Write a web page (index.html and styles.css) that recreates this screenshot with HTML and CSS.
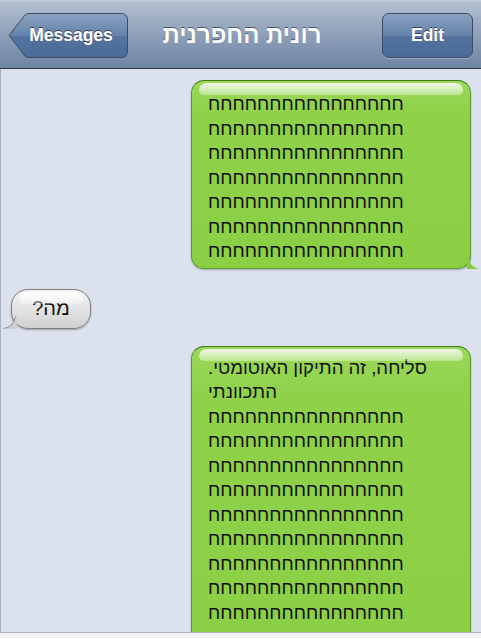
FILE: index.html
```html
<!DOCTYPE html>
<html lang="he">
<head>
    <meta charset="UTF-8">
    <meta name="viewport" content="width=device-width, initial-scale=1.0">
    <title>רונית החפרנית</title>
    <link rel="stylesheet" href="styles.css">
</head>
<body>
    <div class="screen">
        <header class="navbar">
            <a class="nav-btn back-btn" href="#">
                <svg class="back-shape" width="120" height="45" viewBox="0 0 120 45">
                    <defs>
                        <linearGradient id="backFill" x1="0" y1="0" x2="0" y2="1">
                            <stop offset="0" stop-color="#8aa2c2"/>
                            <stop offset="0.5" stop-color="#6682aa"/>
                            <stop offset="0.51" stop-color="#55739f"/>
                            <stop offset="1" stop-color="#4a6a98"/>
                        </linearGradient>
                    </defs>
                    <path d="M1 22.5 L17 2 Q18.5 0.5 21 0.5 L113 0.5 Q119.5 0.5 119.5 7 L119.5 38 Q119.5 44.5 113 44.5 L21 44.5 Q18.5 44.5 17 43 Z" fill="url(#backFill)" stroke="#3a4c68" stroke-width="1"/>
                </svg>
                <span>Messages</span>
            </a>
            <h1 class="title">רונית החפרנית</h1>
            <a class="nav-btn edit-btn" href="#">Edit</a>
        </header>

        <main class="thread">
            <div class="bubble sent">
                <p>חחחחחחחחחחחחחחחח<br>חחחחחחחחחחחחחחחח<br>חחחחחחחחחחחחחחחח<br>חחחחחחחחחחחחחחחח<br>חחחחחחחחחחחחחחחח<br>חחחחחחחחחחחחחחחח<br>חחחחחחחחחחחחחחחח</p>
            </div>

            <div class="bubble received">
                <p>מה?</p>
            </div>

            <div class="bubble sent long">
                <p>סליחה, זה התיקון האוטומטי.<br>התכוונתי<br>חחחחחחחחחחחחחחחח<br>חחחחחחחחחחחחחחחח<br>חחחחחחחחחחחחחחחח<br>חחחחחחחחחחחחחחחח<br>חחחחחחחחחחחחחחחח<br>חחחחחחחחחחחחחחחח<br>חחחחחחחחחחחחחחחח<br>חחחחחחחחחחחחחחחח<br>חחחחחחחחחחחחחחחח</p>
            </div>
        </main>

        <footer class="toolbar"></footer>
    </div>
</body>
</html>
```

FILE: styles.css
```css
body {
    margin: 0;
    font-family: "Liberation Sans", "DejaVu Sans", Arial, sans-serif;
    background-color: #dbe2ed;
}
.screen {
    width: 481px;
    height: 638px;
    overflow: hidden;
    display: flex;
    flex-direction: column;
}

/* Navigation bar */
.navbar {
    height: 66px;
    flex-shrink: 0;
    display: flex;
    align-items: center;
    justify-content: space-between;
    padding: 0 8px;
    border-top: 2px solid #c3cbd7;
    border-bottom: 1px solid #2f3a4a;
    background: linear-gradient(#b3bfd0, #8e9fb8 50%, #6f85a4);
}
.title {
    margin: 0;
    font-size: 24px;
    font-weight: bold;
    color: #fff;
    text-shadow: 0 -1px 0 #4a5a72;
    padding-right: 26px;
}
.nav-btn {
    height: 45px;
    display: flex;
    align-items: center;
    justify-content: center;
    box-sizing: border-box;
    color: #fff;
    font-size: 17.5px;
    font-weight: bold;
    text-decoration: none;
    text-shadow: 0 -1px 0 #2f4260;
}
.back-btn {
    position: relative;
    width: 120px;
    padding-left: 6px;
}
.back-shape {
    position: absolute;
    left: 0;
    top: 0;
}
.back-btn span {
    position: relative;
}
.edit-btn {
    width: 91px;
    border: 1px solid #3a4c68;
    border-radius: 7px;
    background: linear-gradient(#8aa2c2, #6682aa 50%, #55739f 51%, #4a6a98);
    box-shadow: 0 1px 0 rgba(255,255,255,0.25);
}

/* Message thread */
.thread {
    flex: 1;
    overflow: hidden;
    display: flex;
    flex-direction: column;
    padding: 11px 0 0;
    border-left: 1px solid #a9b2be;
}
.bubble {
    position: relative;
    flex-shrink: 0;
    box-sizing: border-box;
}
.bubble p {
    margin: 0;
    direction: rtl;
    text-align: left;
    font-size: 18.6px;
    line-height: 24.5px;
    color: #111;
}
.bubble.sent {
    align-self: flex-end;
    width: 280px;
    margin-right: 10px;
    padding: 11px 16px 4px;
    border: 1px solid #5c9a2b;
    border-top-color: #3f7d12;
    border-radius: 13px;
    background: linear-gradient(#9bd85a, #8fd24a 15%, #8bcf45);
    box-shadow: 0 1px 2px rgba(0,0,0,0.25);
}
.bubble.sent.long {
    padding-top: 9px;
    padding-bottom: 24px;
}
.bubble.sent + .bubble.received {
    margin-top: 20px;
}
.bubble.received + .bubble.sent {
    margin-top: 17px;
}
.bubble::before {
    content: "";
    position: absolute;
    left: 7px;
    right: 7px;
    top: 2px;
    height: 12px;
    border-radius: 9px 9px 6px 6px;
    background: linear-gradient(rgba(255,255,255,0.85), rgba(255,255,255,0.35));
}
.bubble.sent::after {
    content: "";
    position: absolute;
    right: -11px;
    bottom: -1px;
    width: 14px;
    height: 12px;
    background: radial-gradient(circle at 100% 0, transparent 11.5px, #87cb42 12.5px);
}
.bubble.received {
    align-self: flex-start;
    margin-left: 10px;
    width: 80px;
    height: 40px;
    display: flex;
    align-items: center;
    justify-content: center;
    border: 1px solid #7f7f7f;
    border-radius: 17px;
    background: linear-gradient(#f4f4f4, #e3e3e3 50%, #d0d0d0);
    box-shadow: 0 1px 2px rgba(0,0,0,0.3);
}
.bubble.received p {
    font-size: 20px;
    line-height: 1;
    padding-bottom: 2px;
}
.bubble.received::after {
    content: "";
    position: absolute;
    left: -9px;
    bottom: -1px;
    width: 14px;
    height: 13px;
    background: radial-gradient(circle at 0 0, transparent 11.5px, #8a8a8a 12px, #cfcfcf 13px);
}

.toolbar {
    height: 5px;
    flex-shrink: 0;
    border-top: 1px solid #a9b2be;
    background-color: #f3f3f3;
}
```
